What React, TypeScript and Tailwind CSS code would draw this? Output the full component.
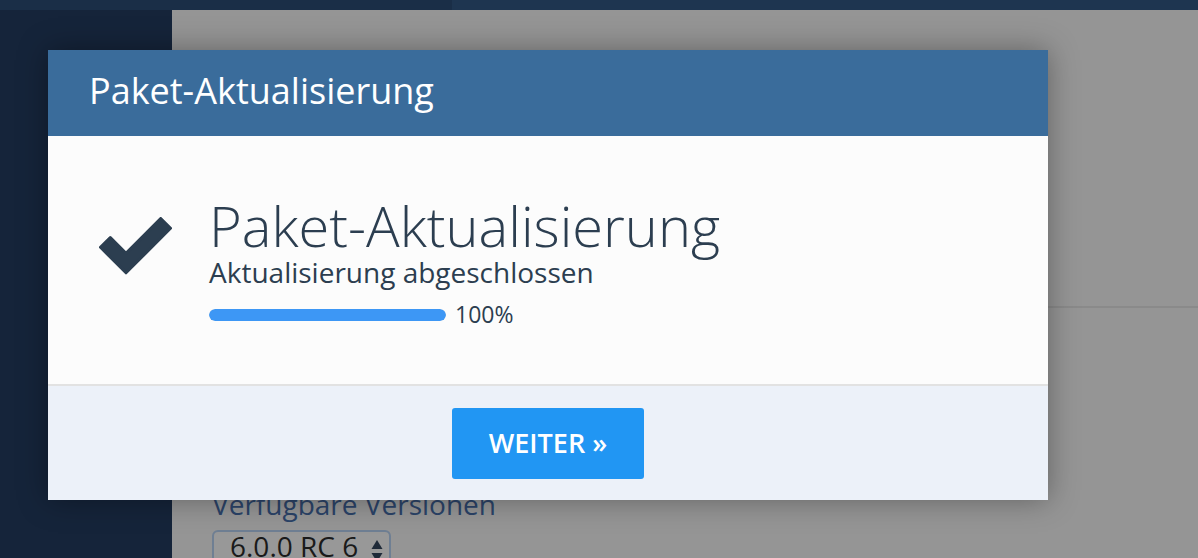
import React from 'react';

const font = { fontFamily: '"Open Sans", "Noto Sans", sans-serif' };

function CheckIcon() {
  // filled check mark, corners rounded by a thin stroke
  return (
    <svg width="73" height="58" viewBox="0 0 73 58" className="shrink-0">
      <polygon
        points="1.5,30.3 11.3,20.5 27,36.2 61.7,1.5 71.5,11.3 27,55.8"
        fill="#2c3e50"
        stroke="#2c3e50"
        strokeWidth="3"
        strokeLinejoin="round"
      />
    </svg>
  );
}

function UpdateModal() {
  return (
    <div className="absolute left-[48px] top-[50px] w-[1000px] h-[450px] flex flex-col shadow-[0_0_28px_rgba(0,0,0,0.35)]">
      <div className="h-[86px] bg-[#3a6c9b] pl-[41px] pt-[23px]">
        <h2 className="text-[36px] leading-none text-white">Paket-Aktualisierung</h2>
      </div>
      <div className="h-[250px] bg-[#fcfcfc] flex pl-[51px] pt-[61px] border-b-2 border-[#e2e2e2]">
        <div className="w-[110px] pt-[20px]">
          <CheckIcon />
        </div>
        <div className="flex flex-col text-[#2c3e50]">
          <div className="text-[56px] leading-[56px] font-light">Paket-Aktualisierung</div>
          <div className="text-[28px] leading-none mt-[5px]">Aktualisierung abgeschlossen</div>
          <div className="flex items-center gap-[9px] mt-[17px]">
            <div className="w-[237px] h-[12px] rounded-full bg-[#e5e5e5] overflow-hidden">
              <div className="h-full rounded-full bg-[#3d97f5]" style={{ width: '100%' }} />
            </div>
            <span className="text-[23px] leading-none">100%</span>
          </div>
        </div>
      </div>
      <div className="flex-1 bg-[#ecf1f9] flex items-center justify-center">
        <button className="w-[192px] h-[71px] rounded-[3px] bg-[#2196f3] text-white text-[27px] font-semibold">
          WEITER »
        </button>
      </div>
    </div>
  );
}

export default function App() {
  return (
    <div className="relative w-[1198px] h-[558px] overflow-hidden bg-[#959595]" style={font}>
      <div className="flex h-[10px]">
        <div className="w-[452px] bg-[#1a2e47]" />
        <div className="flex-1 bg-[#1e3550]" />
      </div>
      <div className="flex h-[548px]">
        <div className="w-[172px] bg-[#15243a]" />
        <div className="flex-1 flex flex-col">
          <div className="h-[298px] shrink-0 border-b-2 border-[#8a8a8a]" />
          <div className="pl-[40px] pt-[182px]">
            <div className="text-[28px] leading-none text-[#2b4368]">Verfügbare Versionen</div>
            <div className="mt-[12px] w-[179px] h-[44px] rounded-[6px] border-2 border-[#6f7f93] bg-[#989898] flex items-start pl-[16px] pr-[6px] justify-between">
              <span className="text-[28px] leading-[28px] text-[#1a1a1a]">6.0.0 RC 6</span>
              <svg width="12" height="22" viewBox="0 0 12 22" className="mt-[8px]">
                <polygon points="6,0 11.5,9 0.5,9" fill="#1f2a38" />
                <polygon points="0.5,13 11.5,13 6,22" fill="#1f2a38" />
              </svg>
            </div>
          </div>
        </div>
      </div>
      <UpdateModal />
    </div>
  );
}
